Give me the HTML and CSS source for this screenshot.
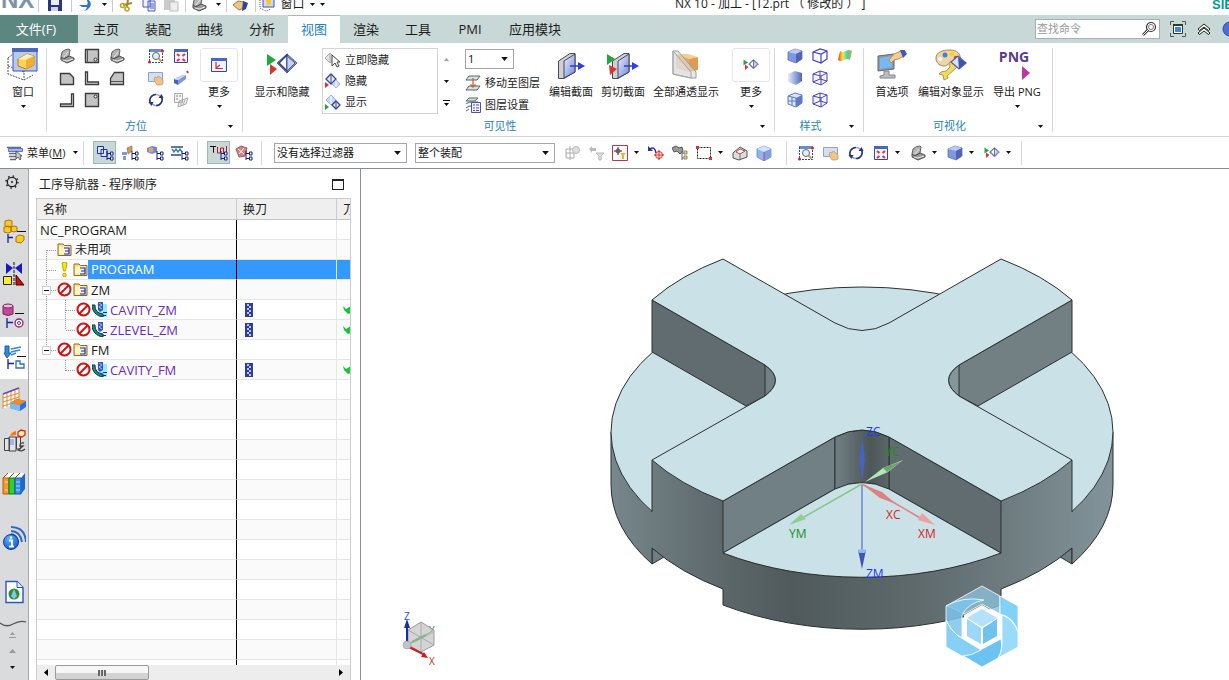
FILE: index.html
```html
<!DOCTYPE html>
<html lang="zh-CN">
<head>
<meta charset="utf-8">
<title>NX 10 - 加工 - [T2.prt （修改的）]</title>
<link rel="stylesheet" href="styles.css">
</head>
<body>
<svg class="defs" aria-hidden="true">
  <defs>
    <linearGradient id="gBlue" x1="0" y1="0" x2="1" y2="1"><stop offset="0" stop-color="#eef2ff"/><stop offset="1" stop-color="#6c86d8"/></linearGradient>
    <linearGradient id="gSoft" x1="0" y1="0" x2="1" y2="0"><stop offset="0" stop-color="#e6ebfb"/><stop offset="1" stop-color="#4c66bb"/></linearGradient>
    <linearGradient id="gRain" x1="0" y1="0" x2="1" y2="0"><stop offset="0" stop-color="#f0392b"/><stop offset=".35" stop-color="#ffe930"/><stop offset=".65" stop-color="#35d6c8"/><stop offset="1" stop-color="#f29a20"/></linearGradient>
    <radialGradient id="gInfo" cx=".4" cy=".3" r=".8"><stop offset="0" stop-color="#5fb4ff"/><stop offset="1" stop-color="#0b4fc4"/></radialGradient>
  </defs>
  <symbol id="dn" viewBox="0 0 5 3"><path d="M0 0h5L2.500 3z" fill="#111"/></symbol>
  <symbol id="tri" viewBox="0 0 16 16"><path d="M2 9L3 4q3-3 7-3l1 1-1 6-6 3z" fill="#b4b4b4" stroke="#555" stroke-width=".9"/><path d="M2 9l3 2 5-3 5 2v2l-7 3-6-3z" fill="#9a9a9a" stroke="#444" stroke-width=".9"/><path d="M5 9l4-5M4 12l4 1 6-2" stroke="#e8e8e8" fill="none"/></symbol>
  <symbol id="front" viewBox="0 0 16 16"><path d="M1.500 1.500h13v13h-13z" fill="#c4c4c4" stroke="#3c3c3c" stroke-width="1.400"/><path d="M3.500 2v12" stroke="#555"/><circle cx="11.500" cy="11.500" r="1.500" fill="#eee" stroke="#333"/></symbol>
  <symbol id="topv" viewBox="0 0 16 16"><path d="M1.500 3.500h9l4 4v7h-13z" fill="#c4c4c4" stroke="#3c3c3c" stroke-width="1.400"/></symbol>
  <symbol id="lv" viewBox="0 0 16 16"><path d="M1.500 2h2v10h11v2.500h-13z" fill="#ddd" stroke="#3c3c3c" stroke-width="1.300"/></symbol>
  <symbol id="rightv" viewBox="0 0 16 16"><path d="M5.500 2.500h9v12h-13v-6z" fill="#c4c4c4" stroke="#3c3c3c" stroke-width="1.300"/><path d="M2 11.500h12" stroke="#555"/></symbol>
  <symbol id="jv" viewBox="0 0 16 16"><path d="M14.500 2h-2v10h-11v2.500h13z" fill="#ddd" stroke="#3c3c3c" stroke-width="1.300"/></symbol>
  <symbol id="back" viewBox="0 0 16 16"><path d="M1.500 1.500h13v13h-13z" fill="#c4c4c4" stroke="#3c3c3c" stroke-width="1.400"/><circle cx="11.500" cy="4.500" r="1.500" fill="#eee" stroke="#333"/></symbol>
  <symbol id="fit" viewBox="0 0 16 16"><path d="M1 1h14v3H1z" fill="#6b8bd0"/><path d="M1.500 2v12.500h13V3" fill="none" stroke="#2a3fd0" stroke-dasharray="2 1"/><circle cx="8" cy="8" r="3.500" fill="#dfeefc" stroke="#666"/><path d="M10.500 10.500l3 3" stroke="#d29a3c" stroke-width="2"/><circle cx="14.500" cy="3" r="1.500" fill="#d22"/><circle cx="1.500" cy="14" r="1.500" fill="#d22"/></symbol>
  <symbol id="win" viewBox="0 0 16 16"><path d="M1.500 2.500h13v12h-13z" fill="#f3f6ff" stroke="#3346b0"/><path d="M1 1h14v3H1z" fill="#4668bd"/><path d="M4 6l2.500 2M12 6L9.500 8M4 13l2.500-2M12 13l-2.500-2" stroke="#e33" stroke-width="2.200"/></symbol>
  <symbol id="pan" viewBox="0 0 16 16"><path d="M.5 2.500h14v9H.5z" fill="#d5dff2" stroke="#8fa1cd"/><path d="M7 7l2 1 1-2 2 1 3 3v4l-2 1H9l-3-5z" fill="#eec48b" stroke="#b98a4c" stroke-width=".6"/></symbol>
  <symbol id="persp" viewBox="0 0 16 16"><path d="M1 9l4 1v5l-4-2z" fill="#4a62b8"/><path d="M5 10l8-5v4l-8 6z" fill="#7f96dd"/><path d="M1 9l8-4h4l-8 5z" fill="#c2cef4"/><path d="M14 1l1 2" stroke="#d33" stroke-width="2"/></symbol>
  <symbol id="rot" viewBox="0 0 16 16"><path d="M3 12A6 6 0 0 1 8 2.500M13 4a6 6 0 0 1-5 9.500" fill="none" stroke="#26357f" stroke-width="1.700"/><path d="M8 2.500a6 6 0 0 1 4 1.500M8 13.500A6 6 0 0 1 4 12" fill="none" stroke="#9aa9dd" stroke-width="1.700"/><path d="M.5 10l5 0-2 4zM10.500 6h5l-2-4z" fill="#26357f"/></symbol>
  <symbol id="snap" viewBox="0 0 16 16"><path d="M1.500 1.500h8v9h-8zM6 9l9-3-2 6-8 3zM8 9v5M12 8l-2 5" fill="#f2f2f2" stroke="#aaa"/><path d="M3 4h2M6 4h2M3 7h2" stroke="#888"/></symbol>
  <symbol id="csys" viewBox="0 0 18 16"><path d="M1.500 1.500h15v13h-15z" fill="#eef2fd" stroke="#3346b0"/><path d="M1 1h16v3H1z" fill="#4668bd"/><path d="M6 5v6.500h7M6 11l4-3" fill="none" stroke="#c33" stroke-width="1.200"/></symbol>
  <symbol id="showhide" viewBox="0 0 32 26"><path d="M1 2l9 6-9 6z" fill="#22a83a"/><path d="M4 12l7 5-7 6z" fill="#d5382e"/><path d="M11 11L21 2l10 9-10 10z" fill="#8a95b5" stroke="#59658f"/><path d="M13 11l8-8v16z" fill="#fff" stroke="#2b3a97" stroke-width="1.500"/><path d="M21 4l8 7-8 8z" fill="#c8d3f4" stroke="#4b5aa8"/></symbol>
  <symbol id="dia" viewBox="0 0 16 16"><path d="M1 6l5-5 5 5-5 5z" fill="#e6ecff" stroke="#3a4790" stroke-width="1.300"/><path d="M6 2v8" stroke="#3a4790"/><path d="M7 11l4-4 4 4-4 4z" fill="#c8d6fa" stroke="#9db2ec"/><path d="M11 8v6" stroke="#fff"/><path d="M0 9l4 3-4 3z" fill="#d5382e"/></symbol>
  <symbol id="dia2" viewBox="0 0 16 16"><path d="M1 6l5-5 5 5-5 5z" fill="#c8d6fa" stroke="#9db2ec"/><path d="M6 2v8" stroke="#fff"/><path d="M7 11l4-4 4 4-4 4z" fill="#e6ecff" stroke="#3a4790" stroke-width="1.300"/><path d="M11 8v6" stroke="#3a4790"/><path d="M0 10l4 3-4 3z" fill="#22a83a"/></symbol>
  <symbol id="dia0" viewBox="0 0 16 16"><path d="M0 6l5-5 5 5-5 5z" fill="#e4e4e4" stroke="#aaa"/><path d="M5 2v8" stroke="#aaa"/><path d="M7 3v11l3-3 2 4 2-1-2-4h3z" fill="#fff" stroke="#444"/></symbol>
  <symbol id="lay" viewBox="0 0 16 16"><path d="M4 1h11l-3 4H1zM4 11h11l-3 4H1z" fill="#d6e3df" stroke="#4d6b6b"/><path d="M8 3v9M5.500 9.500L8 12l2.500-2.500" stroke="#e4572e" stroke-width="1.300" fill="none"/></symbol>
  <symbol id="layset" viewBox="0 0 16 16"><path d="M4 1h9l-3 3H1zM1 7l3-2h9M1 11l3-2h6M1 14l3-2" fill="#d6e3df" stroke="#4d6b6b"/><path d="M6.500 5.500h9v10h-9z" fill="#f2f3ff" stroke="#4a4fc0"/><path d="M8 8h2M11 8h3M8 11h2M11 11h3M8 13.500h2M11 13.500h3" stroke="#4a4fc0"/></symbol>
  <symbol id="sec" viewBox="0 0 28 28"><path d="M1.500 9L13 1.500h5V20L7 26.500H1.500z" fill="#d0d0d4" stroke="#4a4a50"/><path d="M7 9l11-7v18L7 26z" fill="url(#gBlue)" stroke="#40465f"/><path d="M13 14h10" stroke="#2f3fc6" stroke-width="1.500"/><path d="M21 10l7 4-7 4z" fill="#2f3fe0"/></symbol>
  <symbol id="trans" viewBox="0 0 28 30"><path d="M4 4l13 2v16L4 18z" fill="#e5ab6c"/><path d="M4 4l12 0 10 3-9 2z" fill="#f6cd98"/><path d="M17 9l9-2v13l-9 2z" fill="#dd9b54"/><path d="M1 1h5l18 21v6h-5L1 24z" fill="#dadada" fill-opacity=".65" stroke="#9a9a9a"/><path d="M1 1v23l18 4v-6z" fill="#e2e2e2" fill-opacity=".5" stroke="#a2a2a2"/></symbol>
  <symbol id="cube" viewBox="0 0 16 16"><path d="M1 4l7-3 7 2v8l-6 4-8-3z" fill="#7f97de" stroke="#5a70bd" stroke-width=".8"/><path d="M1 4l8 2 6-3-7-2z" fill="#bccaf3"/><path d="M9 6l6-3v8l-6 4z" fill="#4e65b8"/></symbol>
  <symbol id="cubes" viewBox="0 0 16 16"><path d="M1 4l7-3 7 2v8l-6 4-8-3z" fill="url(#gSoft)"/></symbol>
  <symbol id="cubew" viewBox="0 0 16 16"><path d="M1 4l7-3 7 2v8l-6 4-8-3zM1 4l8 2 6-3M9 6v9" fill="#fafaff" stroke="#4740c4" stroke-width="1.200"/></symbol>
  <symbol id="cubex" viewBox="0 0 16 16"><path d="M1 4l7-3 7 2v8l-6 4-8-3zM1 4l8 2 6-3M9 6v9M1 12l7-3 7 2M8 1v8" fill="#f4f4ff" stroke="#4740c4"/></symbol>
  <symbol id="cubeh" viewBox="0 0 16 16"><path d="M1 4l7-3 7 2v8l-6 4-8-3z" fill="#dbe5fb" stroke="#5b7ac8"/><path d="M9 6l6-3v8l-6 4z" fill="#5e79c8"/><path d="M1 4l8 2M5 5v8M1 9h8M9 6v9" stroke="#5b7ac8" fill="none"/></symbol>
  <symbol id="rain" viewBox="0 0 16 16"><path d="M3 3q3 2 6 0t6 0l-2 9q-3-2-6 0t-6 0z" fill="url(#gRain)"/></symbol>
  <symbol id="pref" viewBox="0 0 30 30"><path d="M1 6l16-2v15L1 21z" fill="#8f9aa6" stroke="#667"/><path d="M3 8l12-2v11L3 19z" fill="#7ab8f2"/><path d="M7 21h5v4h6v3H3v-2l4-1z" fill="#b8bec4" stroke="#7d868e"/><path d="M12 10l5-6 7-3 3 5-6 3-4 1-3 3z" fill="#f3cd98" stroke="#b98d55"/><path d="M23 0l4-1 3 5-4 4z" fill="#4459b4"/></symbol>
  <symbol id="pal" viewBox="0 0 32 32"><path d="M1 9C1 3 8 1 15 1s11 4 10 9-5 5-8 4-5 4-9 3S1 14 1 9z" fill="#f2d3a4" stroke="#a98452"/><circle cx="10" cy="6" r="2.500" fill="#2e8be0"/><circle cx="17" cy="5" r="2.300" fill="#f5d80c"/><circle cx="21" cy="9" r="2.300" fill="#e63f2a"/><circle cx="5" cy="10" r="2" fill="#fff"/><path d="M14 14q4-4 8 0 2 4-2 6l-8 7 1 2-4 2-1-5-4-1 2-2 5-1 4-4z" fill="#f3da68" stroke="#b39a35"/><path d="M16 13l7-6 8 7-7 6z" fill="#d8e0fa" stroke="#5461a8" stroke-width="1.300"/><path d="M23 8l8 6-7 6z" fill="#3e55b0"/></symbol>
  <symbol id="folder" viewBox="0 0 15 14"><path d="M1 3V1.500h5L7.500 3H14v10H1z" fill="#f5df8a" stroke="#8e6b1e"/><path d="M2 4h11v8H2z" fill="#fdf4c0"/><path d="M7 5.500h5v6H7M8 8.500h4" stroke="#1a22d8" stroke-width="1.200" fill="none"/></symbol>
  <symbol id="no" viewBox="0 0 15 15"><circle cx="7.500" cy="7.500" r="6" fill="#fff" stroke="#d00f0f" stroke-width="2"/><path d="M3.500 11.500l8-8" stroke="#d00f0f" stroke-width="2"/></symbol>
  <symbol id="op" viewBox="0 0 15 15"><path d="M5 2h10v13H9z" fill="#8fefff"/><path d="M0 3h3c0 5 2 8 8 9v3C4 14 0 9 0 3z" fill="#128a80" stroke="#073b38"/><path d="M6 0h5v8L8 10 6 8z" fill="#3d55b8"/><path d="M7 1l3 2-3 2 3 2" stroke="#a9bcf0" fill="none"/><path d="M11 10.500h4M11 13.500h3" stroke="#1a22d8"/></symbol>
  <symbol id="op2" viewBox="0 0 15 15"><path d="M0 3h3c0 5 2 8 8 9v3C4 14 0 9 0 3z" fill="#128a80" stroke="#073b38"/><path d="M6 0h5v8L8 10 6 8z" fill="#3d55b8"/><path d="M7 1l3 2-3 2 3 2" stroke="#a9bcf0" fill="none"/><path d="M11 10.500h4M11 13.500h3" stroke="#1a22d8"/></symbol>
  <symbol id="tool" viewBox="0 0 8 14"><path d="M0 0h8v14H0z" fill="#2f3f98"/><path d="M2 1h2v2H2zM4 3h2v2H4zM2 5h2v2H2zM4 7h2v2H4zM2 9h2v2H2zM4 11h2v2H4z" fill="#b9c8f2"/></symbol>
  <symbol id="check" viewBox="0 0 8 10"><path d="M0 1l3 3 5-3v7L5 9 1 5z" fill="#16c43a"/></symbol>
  <symbol id="tree" viewBox="0 0 18 16"><path d="M11 6v9M11 8.500h3M11 13.500h3" stroke="#14208c" fill="none"/><path d="M14.500 7h2.500v3h-2.500zM14.500 12h2.500v3h-2.500z" fill="#fff" stroke="#14208c"/></symbol>
</svg>

<header class="titlebar">
  <span class="logo">NX</span>
  <i class="tsep"></i>
  <button class="tb save" aria-label="保存"><svg width="16" height="16" viewBox="0 0 16 16"><path d="M1 1h14v14H1z" fill="#27377e"/><path d="M4 1h8v8H4z" fill="#e8edf8"/><path d="M4 11h7v4H4z" fill="#cdd6ec"/></svg></button>
  <i class="tsep"></i>
  <button class="tb wide" aria-label="撤消"><svg width="16" height="16" viewBox="0 0 16 16"><path d="M2 9h8q2-3-2-7 8 3 5 9-2 3-6 4 3-2 3-4H5z" fill="#2f74cc"/></svg><svg class="dn"><use href="#dn"/></svg></button>
  <i class="tsep"></i>
  <button class="tb" aria-label="剪切"><svg width="16" height="16" viewBox="0 0 16 16"><path d="M4 9l9-2M9 3l-1 8" stroke="#a08a30" stroke-width="2"/><circle cx="3.500" cy="9.500" r="2" fill="none" stroke="#c2a822" stroke-width="1.600"/><circle cx="8" cy="13" r="2" fill="none" stroke="#c2a822" stroke-width="1.600"/></svg></button>
  <button class="tb" aria-label="复制"><svg width="16" height="16" viewBox="0 0 16 16"><path d="M2 1h7v10H2zM7 5h7v10H7z" fill="#eef1ff" stroke="#4a57c6"/><path d="M9 8h4M9 10h4M9 12h4" stroke="#4a57c6"/></svg></button>
  <button class="tb" aria-label="粘贴"><svg width="16" height="16" viewBox="0 0 16 16"><path d="M1 2h11v12H1z" fill="#ccc"/><path d="M7 6h8v9H7z" fill="#eee" stroke="#bbb"/></svg></button>
  <i class="tsep"></i>
  <button class="tb wide" aria-label="定向视图"><svg width="16" height="16"><use href="#tri"/></svg><svg class="dn"><use href="#dn"/></svg></button>
  <i class="tsep"></i>
  <button class="tb" aria-label="触控"><svg width="16" height="16" viewBox="0 0 16 16"><path d="M0 9l5-4 6 1v6l-5 2z" fill="#eec48b" stroke="#a87c3c"/><path d="M10 5l5 2-2 6-4 2z" fill="#31449c"/></svg></button>
  <i class="tsep"></i>
  <button class="tb winbtn"><svg width="16" height="16" viewBox="0 0 16 16"><path d="M1 4v8l6 3 5-2" fill="none" stroke="#555" stroke-dasharray="1 1"/><path d="M4 1h11v10H4z" fill="#cfd9f8" stroke="#3b4fd0"/><path d="M7 4l5-1v5l-4 2z" fill="#fbc531"/></svg><span>窗口</span><svg class="dn"><use href="#dn"/></svg><svg class="dn"><use href="#dn"/></svg></button>
  <h1>NX 10 - 加工 - [T2.prt （ 修改的 ） ]</h1>
  <span class="brand">SIE</span>
</header>

<nav class="tabs">
  <button class="file">文件(F)</button>
  <button>主页</button><button>装配</button><button>曲线</button><button>分析</button><button class="on">视图</button><button>渲染</button><button>工具</button><button>PMI</button><button class="last">应用模块</button>
  <label class="search"><input type="text" placeholder="查找命令" aria-label="查找命令"><svg width="16" height="16" viewBox="0 0 16 16"><circle cx="10" cy="6" r="4.500" fill="#fff" stroke="#333" stroke-width="1.200"/><circle cx="10" cy="6" r="2.500" fill="none" stroke="#777"/><path d="M7 9l-5 5" stroke="#333" stroke-width="2.500"/><path d="M7 9l-5 5" stroke="#fff"/></svg></label>
  <button class="tico" aria-label="全屏"><svg width="16" height="16" viewBox="0 0 16 16"><path d="M.5 4V.5H4M12 .5h3.500V4M15.500 12v3.500H12M4 15.500H.5V12" fill="none" stroke="#555"/><path d="M3.500 3.500h9v9h-9z" fill="#fff" stroke="#333"/><path d="M3 3h10v2H3z" fill="#333"/><path d="M5 6h6v5H5z" fill="#3b86dc"/></svg></button>
  <button class="tico" aria-label="最小化功能区"><svg width="16" height="16" viewBox="0 0 16 16"><path d="M2 8l6-5 6 5-1.500 1.500L8 6 3.500 9.500zM2 12l6-5 6 5-1.500 1.500L8 10l-4.500 3.500z" fill="#fff" stroke="#222"/></svg></button>
  <button class="tico" aria-label="帮助"><svg width="16" height="16" viewBox="0 0 16 16"><circle cx="8" cy="8" r="7" fill="#4d6fd4" stroke="#2b49a8"/></svg></button>
</nav>

<section class="ribbon">
  <div class="grp g0">
    <div class="body"><button class="big"><svg width="32" height="34" viewBox="0 0 32 34"><path d="M1 10v16l16 6 9-5M1 10l5-4M17 16v16M1 18l16 6" fill="none" stroke="#555" stroke-dasharray="2 1"/><path d="M6 1h24v22H6z" fill="#b9c8ee" stroke="#3850dc"/><path d="M5 0h26v4H5z" fill="#4a6ab4"/><path d="M11 11l9-5 7 2v9l-8 4-8-3z" fill="#fbd35a" stroke="#b77d12"/><path d="M11 11l8 1 8-4-7-2z" fill="#ffefb5"/><path d="M19 12l8-4v9l-8 4z" fill="#f3ad2b"/></svg><span>窗口</span><svg class="dn"><use href="#dn"/></svg></button></div>
  </div>
  <div class="grp g1">
    <div class="body">
      <div class="grid3">
        <button aria-label="正三轴测图"><svg><use href="#tri"/></svg></button><button aria-label="前视图"><svg><use href="#front"/></svg></button><button aria-label="正等测图"><svg><use href="#tri"/></svg></button>
        <button aria-label="俯视图"><svg><use href="#topv"/></svg></button><button aria-label="左视图"><svg><use href="#lv"/></svg></button><button aria-label="右视图"><svg><use href="#rightv"/></svg></button>
        <button aria-label="仰视图"><svg><use href="#jv"/></svg></button><button aria-label="后视图"><svg><use href="#back"/></svg></button>
      </div>
      <div class="grid2">
        <button aria-label="缩放"><svg><use href="#fit"/></svg></button><button aria-label="适合窗口"><svg><use href="#win"/></svg></button>
        <button aria-label="平移"><svg><use href="#pan"/></svg></button><button aria-label="透视"><svg><use href="#persp"/></svg></button>
        <button aria-label="旋转"><svg><use href="#rot"/></svg></button><button aria-label="捕捉视图"><svg><use href="#snap"/></svg></button>
      </div>
      <button class="more"><i><svg width="18" height="16"><use href="#csys"/></svg></i><span>更多</span><svg class="dn"><use href="#dn"/></svg></button>
    </div>
    <div class="cap"><span>方位</span><svg class="dn"><use href="#dn"/></svg></div>
  </div>
  <div class="grp g2">
    <div class="body">
      <button class="big w78"><svg width="32" height="34" viewBox="0 -4 32 34"><use href="#showhide" width="32" height="26"/></svg><span>显示和隐藏</span></button>
      <div class="gallery">
        <button><svg><use href="#dia0"/></svg>立即隐藏</button><button><svg><use href="#dia"/></svg>隐藏</button><button><svg><use href="#dia2"/></svg>显示</button>
      </div>
      <div class="galnav"><button aria-label="上"><svg class="dn up"><use href="#dn"/></svg></button><button aria-label="下"><svg class="dn"><use href="#dn"/></svg></button><button aria-label="展开"><svg width="7" height="7" viewBox="0 0 7 7"><path d="M0 .5h7" stroke="#111"/><path d="M1 3h5L3.500 6z"/></svg></button></div>
      <div class="layers">
        <span class="sel layer"><select aria-label="工作图层"><option>1</option></select><svg class="dn"><use href="#dn"/></svg></span>
        <button><svg><use href="#lay"/></svg>移动至图层</button>
        <button><svg><use href="#layset"/></svg>图层设置</button>
      </div>
      <button class="big w52"><svg width="28" height="34" viewBox="0 -4 28 34"><use href="#sec" width="28" height="28"/></svg><span>编辑截面</span></button>
      <button class="big w52"><svg width="32" height="34" viewBox="0 -4 32 34"><use href="#sec" x="4" width="28" height="28"/><path d="M0 2l8 5-8 6z" fill="#22a83a"/><path d="M2 13l8 4-7 6z" fill="#d5382e"/></svg><span>剪切截面</span></button>
      <button class="big w74"><svg width="28" height="34" viewBox="0 -2 28 34"><use href="#trans" width="28" height="30"/></svg><span>全部通透显示</span></button>
      <button class="more m2"><i><svg width="16" height="14"><use href="#showhide"/></svg></i><span>更多</span><svg class="dn"><use href="#dn"/></svg></button>
    </div>
    <div class="cap"><span>可见性</span><svg class="dn"><use href="#dn"/></svg></div>
  </div>
  <div class="grp g3">
    <div class="body">
      <div class="grid3">
        <button aria-label="带边着色"><svg><use href="#cube"/></svg></button><button aria-label="带有淡化边的线框"><svg><use href="#cubew"/></svg></button><button aria-label="面分析"><svg><use href="#rain"/></svg></button>
        <button aria-label="着色"><svg><use href="#cubes"/></svg></button><button aria-label="带有隐藏边的线框"><svg><use href="#cubex"/></svg></button><i></i>
        <button aria-label="局部着色"><svg><use href="#cubeh"/></svg></button><button aria-label="静态线框"><svg><use href="#cubex"/></svg></button>
      </div>
    </div>
    <div class="cap"><span>样式</span><svg class="dn"><use href="#dn"/></svg></div>
  </div>
  <div class="grp g4">
    <div class="body">
      <button class="big w52"><svg width="30" height="34" viewBox="0 -2 30 34"><use href="#pref" width="30" height="30"/></svg><span>首选项</span></button>
      <button class="big w66"><svg width="32" height="34" viewBox="0 -1 32 34"><use href="#pal" width="32" height="32"/></svg><span>编辑对象显示</span></button>
      <button class="big w66"><span class="png">PNG<svg width="8" height="14" viewBox="0 0 8 14"><path d="M0 0l8 7-8 7z" fill="#b83a9c"/></svg></span><span>导出 PNG</span><svg class="dn"><use href="#dn"/></svg></button>
    </div>
    <div class="cap"><span>可视化</span><svg class="dn"><use href="#dn"/></svg></div>
  </div>
</section>

<section class="toolbar">
  <button class="menu"><svg width="16" height="16" viewBox="0 0 16 16"><path d="M0 2.500h14M2 8.500h8M2 11.500h7M3 14.500h6" stroke="#667" stroke-width="1.300"/><path d="M1.500 3.500h14v3h-14z" fill="#9db8f5" stroke="#5b78c8"/><path d="M9 6v8l2-2 2 3 1-1-1-3h2z" fill="#ccc" stroke="#444" stroke-width=".8"/></svg><span>菜单(<u>M</u>)</span><svg class="dn"><use href="#dn"/></svg></button>
  <i class="sep"></i>
  <button class="tg on" aria-label="程序顺序视图"><svg viewBox="0 0 18 16"><path d="M1.500 1.500h6v7h-6zM5 4.500h6v7H5z" fill="#dfe6fb" stroke="#1e2fa8"/><use href="#tree"/></svg></button>
  <button class="tg" aria-label="机床视图"><svg viewBox="0 0 18 16"><path d="M1 7h5v3H1zM2 11h3v4H2z" fill="#7a9ad8"/><path d="M6 3l5-2v5l-4 3z" fill="#d99b3e" stroke="#666" stroke-width=".6"/><use href="#tree"/></svg></button>
  <button class="tg" aria-label="几何视图"><svg viewBox="0 0 18 16"><path d="M1 3l5-2 5 1v5L6 9 1 7z" fill="#6e88d6"/><circle cx="5" cy="5" r="2.500" fill="#e8a07a"/><use href="#tree"/></svg></button>
  <button class="tg" aria-label="加工方法视图"><svg viewBox="0 0 18 16"><path d="M0 2h12M0 10h10" stroke="#2b4f7a" stroke-width="1.500"/><path d="M1 4l2 3 2-3 2 3 2-3 2 3" stroke="#3b88b8" fill="none" stroke-width="1.400"/><use href="#tree"/></svg></button>
  <i class="sep"></i>
  <button class="tg on" aria-label="显示刀轨"><svg viewBox="0 0 18 16"><path d="M3.500 2v6M7.500 8V2M7.500 8h3M10.500 8V3M10.500 3h3v5M13.500 8h3V1" stroke="#c11616" fill="none"/><path d="M0 1.500h6M3.500 2v5" stroke="#111"/><use href="#tree"/></svg></button>
  <button class="tg" aria-label="过切检查"><svg viewBox="0 0 18 16"><path d="M1 4l5-3 6 2-2 8-6 1z" fill="#d98080" stroke="#9a5a5a"/><path d="M3 4l6 5M4 9l5-6" stroke="#fff"/><use href="#tree"/></svg></button>
  <i class="sep"></i>
  <span class="sel f1"><select aria-label="选择过滤器"><option>没有选择过滤器</option></select><svg class="dn"><use href="#dn"/></svg></span>
  <span class="sel f2"><select aria-label="选择范围"><option>整个装配</option></select><svg class="dn"><use href="#dn"/></svg></span>
  <div class="run">
    <button aria-label="选择常规"><svg><path d="M2 4h8v9H2zM2 8h8M6 1v14" fill="none" stroke="#aaa"/><circle cx="12" cy="5" r="3.500" fill="#ddd" stroke="#bbb"/></svg></button>
    <button aria-label="重置过滤器"><svg><path d="M1 4l3-3v2h4v3H4v2z" fill="#bbb"/><path d="M8 8h8l-3 3v4h-2v-4z" fill="#ddd" stroke="#bbb"/></svg></button>
    <span class="split"><button aria-label="捕捉点"><svg><path d="M.5 .5h15v15H.5z" fill="#fff" stroke="#c3304a"/><circle cx="6" cy="6" r="2" fill="none" stroke="#c33"/><path d="M6 2v8M2 6h8" stroke="#333"/><path d="M8 8h6l-2 2.500V14h-2v-3.500z" fill="#f0b429"/></svg></button><svg class="dn"><use href="#dn"/></svg></span>
    <button aria-label="旋转点"><svg><path d="M8 8Q7 1 2 4" fill="none" stroke="#2a3590" stroke-width="1.500"/><path d="M0 1v5h5z" fill="#2a3590"/><circle cx="11" cy="10" r="3.500" fill="#fff" stroke="#d22"/><path d="M11 5v10M6 10h10" stroke="#d22"/></svg></button>
    <button aria-label="导航器中查找"><svg><path d="M0 3l4-2 3 2 3-1 1 4-3 3-3-3-3 1z" fill="#999" stroke="#555"/><path d="M10 6v9M10 8h3M10 13h3" stroke="#567"/><path d="M12 6h3v3h-3zM12 11h3v3h-3z" fill="#e8cf50" stroke="#987"/></svg></button>
    <span class="split"><button aria-label="矩形选择"><svg><path d="M1.500 2.500h13v11h-13z" fill="none" stroke="#222" stroke-dasharray="2 1"/><path d="M0 1h3v3H0zM13 12h3v3h-3z" fill="#d33"/></svg></button><svg class="dn"><use href="#dn"/></svg></span>
    <button aria-label="高亮隐藏边"><svg><path d="M1 8l7-6 7 4v6l-8 3-6-2z" fill="#ddd" stroke="#555"/><path d="M4 7l4-3 5 2-5 3z" fill="#fff" stroke="#c44"/><path d="M8 9v5" stroke="#777"/></svg></button>
    <button aria-label="着色面"><svg><path d="M1 4l7-3 7 3v8l-7 4-7-4z" fill="#8ab7f5" stroke="#5b78b8" stroke-width=".7"/><path d="M1 4l7-3 7 3-7 3z" fill="#cfe4fd"/><path d="M8 7l7-3v8l-7 4z" fill="#7d9fe6"/><path d="M8 7v9" stroke="#e36"/></svg></button>
  </div>
  <i class="sep s2"></i>
  <div class="run r2">
    <button aria-label="缩放"><svg><use href="#fit"/></svg></button>
    <button aria-label="平移"><svg><use href="#pan"/></svg></button>
    <button aria-label="旋转"><svg><use href="#rot"/></svg></button>
    <span class="split"><button aria-label="适合窗口"><svg><use href="#win"/></svg></button><svg class="dn"><use href="#dn"/></svg></span>
    <span class="split"><button aria-label="定向"><svg><use href="#tri"/></svg></button><svg class="dn"><use href="#dn"/></svg></span>
    <span class="split"><button aria-label="着色"><svg><use href="#cube"/></svg></button><svg class="dn"><use href="#dn"/></svg></span>
    <span class="split"><button aria-label="显示和隐藏"><svg><use href="#showhide"/></svg></button><svg class="dn"><use href="#dn"/></svg></span>
  </div>
  <i class="sep"></i>
</section>

<main>
  <aside class="side">
    <button class="gear" aria-label="资源条选项"><svg width="14" height="14" viewBox="0 0 14 14"><circle cx="7" cy="7" r="4.700" fill="none" stroke="#222" stroke-width="1.300"/><circle cx="7" cy="7" r="6" fill="none" stroke="#222" stroke-width="1.500" stroke-dasharray="1.500 3.210"/><circle cx="7" cy="7" r="1" fill="#222"/></svg></button>
    <button aria-label="装配导航器"><svg viewBox="0 0 24 26"><path d="M3 2l4-1 3 1v5l-3 1-4-1zM2 8l4-1 3 1v5l-3 1-4-1zM9 8l4-1 2 1v4l-3 1-3-1z" fill="#fcc92a" stroke="#a97808"/><path d="M15 12.500h9" stroke="#111"/><path d="M6 15v9M6 18.500h5" stroke="#1420a0" stroke-width="1.300"/><path d="M14 18l3-2 5 1v4l-3 3-5-1z" fill="#fcc92a" stroke="#a97808"/></svg></button>
    <button aria-label="约束导航器"><svg viewBox="0 0 24 26"><path d="M4 2l7 5-7 6zM20 2l-7 5 7 6z" fill="#1818c8"/><path d="M12 1v24" stroke="#111" stroke-dasharray="3 1"/><path d="M1.500 15.500h8v8h-8z" fill="#ffe92c" stroke="#222"/><path d="M14 14v10h8z" fill="#c81010" stroke="#400"/></svg></button>
    <button aria-label="部件导航器"><svg viewBox="0 0 24 26"><path d="M1 3v8q5 3 10 0V3z" fill="#c04a9a" stroke="#7a2560"/><ellipse cx="6" cy="3" rx="5" ry="2" fill="#efb6dc" stroke="#7a2560"/><path d="M13 10.500h9" stroke="#111"/><path d="M5 15v10M5 19.500h6" stroke="#1420a0" stroke-width="1.300"/><circle cx="17" cy="20" r="4" fill="#fff" stroke="#902070" stroke-width="1.300"/><circle cx="17" cy="20" r="1.500" fill="none" stroke="#902070"/></svg></button>
    <button class="on" aria-label="工序导航器"><svg viewBox="0 0 24 26"><path d="M2 1h4v7h2l-4 5-3-5h1z" fill="#3787d6" stroke="#1d5ca4"/><path d="M8 4l10-2M8 7l9-2M8 10l5-2" stroke="#3787d6" stroke-width="1.400"/><path d="M14 11.500h9" stroke="#111"/><path d="M5 14v10M5 18.500h6" stroke="#1420a0" stroke-width="1.300"/><path d="M13 16h4v3h4v4h-8z" fill="#fff" stroke="#2b6fc0" stroke-width="1.300"/></svg></button>
    <button aria-label="加工特征导航器"><svg viewBox="0 0 24 26"><path d="M1 7l16-6v14L1 22z" fill="#fff"/><path d="M1 7l16-6M1 11l16-5M1 15l16-5M1 19l16-5M1 22V7M5 20V6M9 19V4M13 17V3M17 15V1" stroke="#e8862a" fill="none"/><path d="M1 7l16-6" stroke="#6b46b8" stroke-width="1.600"/><path d="M8 16l7-4 9 2v6l-6 4-10-3z" fill="#2471e8"/><path d="M8 16l7-4 9 2-6 4z" fill="#f58a1c"/><path d="M8 16l10 2v6L8 21z" fill="#7cbcf0"/></svg></button>
    <button aria-label="机床导航器"><svg viewBox="0 0 24 26"><path d="M2.500 9.500h5v12h-5zM7 8h7v14H7zM14.500 8h4v12h-4z" fill="#e3e3e8" stroke="#444"/><path d="M8 10h4v6H8z" fill="#9bb8e8"/><path d="M8 7q1-4 6-5v4" fill="#f07a1e"/><path d="M16 3l3-2 4 1v4l-3 2-4-1z" fill="#fff3a0" stroke="#d22" stroke-width="1.300"/><path d="M22 14q-4-1-4 3h3q-3 3-5 4 4 2 7-1" fill="none" stroke="#444" stroke-width="1.300"/></svg></button>
    <button aria-label="重用库"><svg viewBox="0 0 24 26"><path d="M1 6l4-4h18v16l-5 5H1z" fill="#fff"/><path d="M1 7h6v16H1z" fill="#f49a2c" stroke="#b05f08"/><path d="M7 7h6v16H7z" fill="#2fd02f" stroke="#127a12"/><path d="M13 7h6v16h-6z" fill="#3a92f0" stroke="#1256a8"/><path d="M19 7l4-5v16l-4 5z" fill="#2068c8"/><path d="M1 7l5-5M7 7l5-5M13 7l5-5" stroke="#8a4a10"/><path d="M3 11h3M3 19h3M14 11h4M14 15h4M14 19h4" stroke="#fff" stroke-opacity=".6"/></svg></button>
    <button class="tall info" aria-label="信息"><svg viewBox="0 0 24 26"><path d="M9 2q14 0 15 15M9 6q9 0 11 11M9 9q6 1 7 8" stroke="#2f66c8" stroke-width="2" fill="none"/><circle cx="9" cy="17" r="7.500" fill="url(#gInfo)" stroke="#0a3d94"/><path d="M7 15.500h3v5.500M7 21.500h5" stroke="#fff" stroke-width="1.800" fill="none"/><circle cx="9" cy="12.500" r="1.300" fill="#fff"/></svg></button>
    <button class="tall" aria-label="网页浏览器"><svg viewBox="0 0 24 26"><path d="M4 2.500h11l6 6v15H4z" fill="#fff" stroke="#2a56c0" stroke-width="1.400"/><path d="M15 2.500v6h6" fill="#e4ecff" stroke="#2a56c0"/><circle cx="12" cy="15" r="5.500" fill="#2f8f2a"/><path d="M12 10l3 7-3 3-3-3z" fill="#7fc8f8"/></svg></button>
    <svg class="wave" viewBox="0 0 28 8"><path d="M0 4q6 5 13 1t13-2" fill="none" stroke="#555" stroke-width="1.300"/></svg>
    <button class="nav" aria-label="首"><svg width="7" height="6" viewBox="0 0 7 6"><path d="M1 3h5L3.500 0zM0 5h7v1H0z" fill="#999"/></svg></button>
    <button class="nav" aria-label="上"><svg width="5" height="3" viewBox="0 0 5 3"><path d="M0 3h5L2.500 0z" fill="#999"/></svg></button>
    <button class="nav" aria-label="下"><svg class="dn"><use href="#dn"/></svg></button>
  </aside>

  <section class="panel">
    <div class="phead"><h2>工序导航器 - 程序顺序</h2><button aria-label="最大化"></button></div>
    <div class="tbl">
      <div class="scroll">
      <table>
        <colgroup><col class="c1"><col class="c2"><col class="c3"></colgroup>
        <thead><tr><th>名称</th><th>换刀</th><th>刀</th></tr></thead>
        <tbody>
          <tr><td><div>NC_PROGRAM</div></td><td></td><td></td></tr>
          <tr><td><div class="l1 zh"><svg><use href="#folder"/></svg>未用项</div></td><td></td><td></td></tr>
          <tr class="cur"><td><div class="l1"><svg viewBox="0 0 15 15"><path d="M5 1q3-2 5 0l-1.500 8h-2z" fill="#ffe600" stroke="#a89400" stroke-width=".8"/><circle cx="7.500" cy="13" r="1.800" fill="#ffe600" stroke="#a89400" stroke-width=".8"/></svg><svg><use href="#folder"/></svg><b>PROGRAM</b></div></td><td></td><td></td></tr>
          <tr><td><div class="l1"><svg><use href="#no"/></svg><svg><use href="#folder"/></svg>ZM</div></td><td></td><td></td></tr>
          <tr class="opn"><td><div class="l2"><svg><use href="#no"/></svg><svg><use href="#op"/></svg>CAVITY_ZM</div></td><td><svg class="t"><use href="#tool"/></svg></td><td><svg class="k"><use href="#check"/></svg></td></tr>
          <tr class="opn"><td><div class="l2"><svg><use href="#no"/></svg><svg><use href="#op2"/></svg>ZLEVEL_ZM</div></td><td><svg class="t"><use href="#tool"/></svg></td><td><svg class="k"><use href="#check"/></svg></td></tr>
          <tr><td><div class="l1"><svg><use href="#no"/></svg><svg><use href="#folder"/></svg>FM</div></td><td></td><td></td></tr>
          <tr class="opn"><td><div class="l2"><svg><use href="#no"/></svg><svg><use href="#op"/></svg>CAVITY_FM</div></td><td><svg class="t"><use href="#tool"/></svg></td><td><svg class="k"><use href="#check"/></svg></td></tr>
          <tr><td></td><td></td><td></td></tr><tr><td></td><td></td><td></td></tr><tr><td></td><td></td><td></td></tr><tr><td></td><td></td><td></td></tr><tr><td></td><td></td><td></td></tr><tr><td></td><td></td><td></td></tr><tr><td></td><td></td><td></td></tr><tr><td></td><td></td><td></td></tr><tr><td></td><td></td><td></td></tr><tr><td></td><td></td><td></td></tr><tr><td></td><td></td><td></td></tr><tr><td></td><td></td><td></td></tr><tr><td></td><td></td><td></td></tr><tr><td></td><td></td><td></td></tr><tr><td></td><td></td><td></td></tr>
        </tbody>
      </table>
      <svg class="lines" width="40" height="160" viewBox="0 0 40 160"><path d="M9.500 30v98M10 30.500h9M10 50.500h9M14 70.500h5M28.500 80v30M29 90.500h9M29 110.500h9M14 130.500h5M28.500 140v11M29 150.500h9" fill="none" stroke="#999" stroke-dasharray="1 1"/><path d="M5.500 66.500h8v8h-8zM5.500 126.500h8v8h-8z" fill="#fff" stroke="#ccc"/><path d="M7 70.500h5M7 130.500h5" stroke="#111"/></svg>
      </div>
      <div class="hbar"><button aria-label="左"><svg width="4" height="7" viewBox="0 0 4 7"><path d="M4 0v7L0 3.500z"/></svg></button><span class="track"><i class="thumb"></i></span><button aria-label="右"><svg width="4" height="7" viewBox="0 0 4 7"><path d="M0 0v7l4-3.500z"/></svg></button></div>
    </div>
  </section>

  <section class="view">
    <svg viewBox="361 169 868 511" preserveAspectRatio="xMidYMid meet" role="img" aria-label="T2.prt">
      <defs>
        <linearGradient id="cyl" gradientUnits="userSpaceOnUse" x1="611" y1="0" x2="1113" y2="0"><stop offset="0" stop-color="#77878b"/><stop offset=".09" stop-color="#6c7a7e"/><stop offset=".22" stop-color="#5d686b"/><stop offset=".36" stop-color="#505a5c"/><stop offset=".6" stop-color="#5d696b"/><stop offset=".8" stop-color="#6f7d81"/><stop offset="1" stop-color="#82949a"/></linearGradient>
        <linearGradient id="fil" x1="0" y1="0" x2="1" y2="0"><stop offset="0" stop-color="#718085"/><stop offset=".65" stop-color="#4d5658"/><stop offset="1" stop-color="#5c676a"/></linearGradient>
      </defs>
      <g stroke="#2b3030" stroke-width="1" stroke-linejoin="round">
        <path d="M652 548V564L664 557ZM1072 548V564L1060 557Z" fill="#6e7d81"/>
        <path d="M611 432V484A251 145 0 0 0 652 564V548A251 145 0 0 0 723 589V605A251 145 0 0 0 1001 605V589A251 145 0 0 0 1072 548V564A251 145 0 0 0 1113 484V432Z" fill="url(#cyl)"/>
        <ellipse cx="862" cy="432" rx="251" ry="145" fill="#cae1e7"/>
        <path d="M652 300L765 365Q786 380 765 396L746 406L652 352Z" fill="#606c70"/>
        <path d="M765 365Q786 380 765 396Z" fill="#728186"/>
        <path d="M1072 300L959 365Q938 380 959 396L978 406L1072 352Z" fill="#728084"/>
        <path d="M959 365Q938 380 959 396Z" fill="#85969b"/>
        <path d="M652 460V513A251 145 0 0 0 723 555V501L1001 501V555A251 145 0 0 0 1072 513V460Z" fill="url(#cyl)" stroke="none"/>
        <path d="M652 512V460M1072 512V460" fill="none"/>
        <path d="M723 501L835 437V489L723 553Z" fill="#718085"/>
        <path d="M1001 501L889 437V489L1001 553Z" fill="#606c70"/>
        <path d="M835 437Q862 423 889 437V489Q862 476 835 489Z" fill="url(#fil)"/>
        <path d="M723 553L835 489Q862 476 889 489L1001 553A251 145 0 0 1 723 553Z" fill="#cae1e7"/>
        <path d="M723 259L835 323Q862 338 889 323L1001 259A251 145 0 0 1 1072 300L959 365Q938 380 959 396L1072 460A251 145 0 0 1 1001 501L889 437Q862 423 835 437L723 501A251 145 0 0 1 652 460L765 396Q786 380 765 365L652 300A251 145 0 0 1 723 259Z" fill="#cae1e7"/>
      </g>
      <path d="M862 484V552" stroke="#7a96d4" stroke-width="1.800"/><path d="M858 550h8l-4 19z" fill="#3d57b0"/><ellipse cx="862" cy="551" rx="4" ry="2" fill="#92b8fa"/>
      <path d="M862 437l3 22-3 22-3-22z" fill="#4763bb"/>
      <path d="M862 484l-58 33" stroke="#86c886" stroke-width="1.500"/><path d="M789 525l12-11 5 5z" fill="#90cd90"/>
      <path d="M865 482l18-14 20-8-15 12z" fill="#b5e6b5"/><path d="M883 468l4 4 15-11z" fill="#6aa36a"/>
      <path d="M862 484l60 35" stroke="#e87f7f" stroke-width="1.500"/><path d="M862 484l20 8 14 12-16-6z" fill="#dd8080"/><path d="M935 525l-17-5 4-7z" fill="#f0a0a0"/>
      <g class="axis"><text x="866" y="436" fill="#1b3cf0">ZC</text><text x="866" y="578" fill="#1b3cf0">ZM</text><text x="885" y="456" fill="#149114">YC</text><text x="789" y="538" fill="#149114">YM</text><text x="886" y="519" fill="#d81e1e">XC</text><text x="918" y="538" fill="#d81e1e">XM</text></g>
      <g class="axis small"><text x="404" y="620" fill="#2f4df0">Z</text><text x="429" y="634" fill="#149114">Y</text><text x="429" y="665" fill="#d81e1e">X</text></g>
      <path d="M407 645l26-13" stroke="#6bb06b" stroke-width="2"/>
      <path d="M421 622l13 8v15l-13 7-13-7v-15z" fill="#c9c9c9" fill-opacity=".8" stroke="#9a9a9a"/><path d="M408 630l26 15M434 630l-26 15M421 622v30" stroke="#aaa"/><path d="M412 642l14-7" stroke="#86b489" stroke-width="2"/>
      <path d="M407 644v-18" stroke="#0f2fb0" stroke-width="2"/><path d="M404 628l3-9 3 9z" fill="#0f2fb0"/>
      <path d="M409 647l16 8" stroke="#cc2020" stroke-width="2"/><path d="M428 658l-7-1 3-5z" fill="#cc2020"/><circle cx="407" cy="645" r="4" fill="#c4c4c4" stroke="#909090" stroke-width=".5"/>
      <g stroke="#fff" stroke-width="1" stroke-opacity=".8">
        <path d="M982 586L1000 596V614L982 604L964 614Q955 608 946 606Z" fill="#8bbfd8" fill-opacity=".8"/>
        <path d="M1000 596L1018 606V632Q1014 617 1000 614Z" fill="#74cdf6" fill-opacity=".9"/>
        <path d="M1018 632V647L998 658Q1003 650 1002 638V615Q1013 619 1018 632Z" fill="#8fd6fa" fill-opacity=".9"/>
        <path d="M982 667L998 658Q1003 650 1001 639L982 649Q973 655 962 655Z" fill="#5abdf0" fill-opacity=".9"/>
        <path d="M946 647L962 656Q972 656 981 650L963 639Q952 633 946 620Z" fill="#79cbf5" fill-opacity=".9"/>
        <path d="M946 606V620Q952 633 962 638V615Q968 603 984 600Q963 596 946 606Z" fill="#7cc4ec" fill-opacity=".85"/>
      </g>
      <path d="M982 605L1000 615V638L982 648L964 638V615Z" fill="#fff" fill-opacity=".95"/>
      <path d="M982 609l15 9-15 9-15-9z" fill="#b5e2fa"/><path d="M967 619l14 9v16l-14-8z" fill="#9ad7f8"/><path d="M997 619l-14 9v16l14-8z" fill="#6fc3ef"/>
    </svg>
  </section>
</main>
</body>
</html>
```
FILE: styles.css
```css
*{box-sizing:border-box}
html,body{height:100%}
body{margin:0;display:flex;flex-direction:column;overflow:hidden;background:#fff;color:#1c1c1c;font:11px/16px "Open Sans","Noto Sans CJK SC",sans-serif}
button{border:0;background:none;padding:0;margin:0;font:inherit;color:inherit;display:flex;align-items:center;justify-content:center;flex:none;white-space:nowrap}
svg{display:block;flex:none}
h1,h2{margin:0;font-weight:400}
.defs{position:absolute;width:0;height:0}
.dn{width:5px;height:3px}

.titlebar{height:15px;flex:none;display:flex;align-items:flex-end;overflow:hidden;position:relative}
.logo{width:38px;padding-left:1px;font:bold 24px/28px "Liberation Sans",sans-serif;color:#7c94ab;height:29px}
.tsep{width:1px;height:12px;background:#ccc;margin:0 3px 3px}
.logo + .tsep{margin-left:0}
.tb{width:22px;height:22px}
.tb.save{width:26px}
.tb.wide{width:34px;gap:9px}
.tb.winbtn{width:66px;gap:5px;font-size:12px}
.titlebar h1{position:absolute;left:675px;bottom:0;font-size:12px;line-height:22px;white-space:nowrap}
.brand{margin-left:auto;width:17px;overflow:hidden;font:bold 13px/16px "Liberation Sans",sans-serif;color:#009a96;height:18px}

.tabs{height:28px;flex:none;background:#c8d8d6;display:flex;align-items:stretch;font-size:13px}
.tabs > button{width:52px}
.tabs .file{width:78px;padding-right:6px;background:#5c8781;color:#fff;margin-right:2px}
.tabs .on{background:#fff;color:#1e82bd;border-top:1px solid #a9b7b6;padding-bottom:1px}
.tabs .last{width:78px}
.search{margin-left:auto;align-self:center;width:125px;height:20px;display:flex;align-items:center;background:#fff;border:1px solid #a8b0b0;padding-right:2px}
.search input{flex:1;min-width:0;border:0;outline:0;padding:0 1px;font:inherit;font-size:11px;background:none}
.search input::placeholder{color:#9a9a9a;opacity:1}
.tabs .tico{width:26px}
.search + .tico{margin-left:5px}
.tabs .tico:last-child{margin-right:-14px}

.ribbon{height:94px;flex:none;display:flex;padding:5px 0 4px;border-bottom:1px solid #d4d4d4}
.grp{display:flex;flex-direction:column;border-right:1px solid #d8d8d8;flex:none}
.g0{width:47px}.g1{width:196px}.g2{width:532px}.g3{width:89px}.g4{width:189px}
.body{flex:1;display:flex;align-items:flex-start}
.cap{height:12px;display:flex;align-items:center;justify-content:center;color:#1e82bd;position:relative;padding-right:17px}
.cap .dn{position:absolute;right:9px}
.big{flex-direction:column;justify-content:flex-start;width:46px}
.big > span,.more > span{margin-top:2px}
.big > .dn,.more > .dn{margin-top:5px}
.w78{width:78px}.w52{width:52px}.w74{width:74px}.w66{width:66px}
.grid3,.grid2{display:grid;grid-auto-rows:22px;grid-template-columns:repeat(3,25px);margin-top:-3px}
.grid2{grid-template-columns:repeat(2,25px)}
.grid3 svg,.grid2 svg,.gallery svg,.layers button svg{width:16px;height:16px}
.g1 .grid3{margin-left:7px}.g1 .grid2{margin-left:14px}
.g3 .grid3{margin-left:7px}
.more{flex-direction:column;width:38px;margin-left:7px}
.more i{width:38px;height:34px;border:1px solid #e6e6e6;border-radius:3px;display:flex;align-items:center;justify-content:center}
.gallery{width:116px;height:66px;border:1px solid #d4d4d4;margin-left:1px;display:flex;flex-direction:column}
.gallery button{height:21px;justify-content:flex-start;padding-left:2px;gap:4px}
.galnav{width:16px;display:flex;flex-direction:column}
.galnav button{height:22px}
.up{transform:rotate(180deg);opacity:.4}
.layers{width:91px;padding-left:11px;display:flex;flex-direction:column}
.layers button{height:22px;justify-content:flex-start;gap:4px}
.sel{position:relative;display:flex;align-items:center;flex:none}
.sel select{appearance:none;width:100%;height:20px;border:1px solid #a5a5a5;border-radius:0;background:#fff;padding:0 16px 0 2px;font:inherit;color:#111}
.sel .dn{position:absolute;right:6px;width:7px;height:4px}
.layer{width:49px;margin:1px 0 3px}
.m2{margin-left:9px}
.g4 .body{padding-left:2px}
.png{height:34px;margin:0 6px 0 0;font:bold 14px/18px "Open Sans",sans-serif;color:#5b3b8c;display:flex;flex-direction:column}
.big > .png{margin-top:0}
.png svg{margin-left:23px}

.toolbar{height:32px;flex:none;display:flex;align-items:center;border-bottom:1px solid #848b93}
.menu{width:71px;margin:0 5px 0 7px;gap:4px;justify-content:flex-start}
.menu .dn{margin-left:4px}
.sep{width:1px;height:24px;background:#d8d8d8;margin:0 9px 0 0;flex:none}
.tg{width:23px;height:23px;margin-right:2px}
.tg svg{width:18px;height:16px}
.tg.on{background:#c8d8d6;border:1px solid #9fb8b4}
.tg + .sep{margin-left:4px}
.sel.f1{width:133px;margin:0 8px 0 3px}
.sel.f2{width:140px}
.run{display:flex;gap:6px;margin-left:8px}
.run button{width:18px;height:18px}
.run svg{width:16px;height:16px}
.split{display:flex;align-items:center;width:30px;gap:5px}
.split .dn{width:5px;height:3px}
.s2{margin:0 2px 0 13px}
.r2{gap:7px;margin-right:8px}

main{flex:1;min-height:0;display:flex}
.side{width:29px;flex:none;background:#dadbdc;border-right:1px solid #a8a8a8;display:flex;flex-direction:column;overflow:hidden}
.side button{height:42px;width:28px}
.side button svg:not(.dn){width:24px;height:26px}
.side .gear{height:26px;margin-bottom:16px;padding-right:4px}
.side .gear svg:not(.dn){width:14px;height:14px}
.side .on{background:#fff;width:29px}
.side .tall{height:54px}
.side .info{margin-top:6px}
.side .wave{width:28px;height:8px}
.side .nav{height:16px;padding-right:4px}
.side .nav svg:not(.dn){width:7px;height:6px}
.panel{width:332px;flex:none;padding:0 9px 0 7px;border-right:1px solid #8a8f94;display:flex;flex-direction:column;font-size:12px}
.phead{height:29px;flex:none;display:flex;align-items:center;justify-content:space-between;padding:2px 7px 0 3px}
.phead h2{font-size:12px}
.phead button{width:12px;height:11px;border:1px solid #222;border-top-width:2px}
.tbl{flex:1;min-height:0;display:flex;flex-direction:column;border:1px solid #ccc;border-bottom:0}
.scroll{flex:1;min-height:0;overflow:hidden;position:relative}
table{width:100%;border-collapse:separate;border-spacing:0;table-layout:fixed}
.c1{width:200px}.c2{width:100px}
th{height:21px;padding:1px 0 0 6px;text-align:left;font-weight:400;background:#efefef;border-right:1px solid #ccc;border-bottom:1px solid #c4c4c4;overflow:hidden;line-height:18px;white-space:nowrap}
td{height:20px;padding:0 0 0 8px;border-right:1px solid #e6e6e6;border-bottom:1px solid #e6e6e6;overflow:hidden;font-size:13px;line-height:18px}
td:first-child{border-right-color:#000;padding-left:3px}
th:last-child,td:last-child{border-right:0}
tbody tr:nth-child(even) td{background:#fafafa}
td > div{display:flex;align-items:center;height:19px;gap:1px}
td svg{width:15px;height:15px}
.zh{font-size:12px}
.l1{padding-left:17px}
.l2{padding-left:36px}
.l1 svg:last-of-type,.l2 svg:last-of-type{margin-right:2px}
.cur b{font-weight:400;background:#3399ff;color:#fff;flex:1;margin-left:-3px;padding-left:3px;height:19px}
.cur td:nth-child(n+2){background:#3399ff}
.opn{color:#6a2bc4}
td .t{width:8px;height:14px}
td .k{width:8px;height:10px}
td:last-child{padding-left:6px}
.lines{position:absolute;left:0;top:21px}
.hbar{height:15px;flex:none;display:flex;background:#ededed}
.hbar button{width:18px}
.track{flex:1;display:flex}
.thumb{width:94px;border:1px solid #999;border-radius:2px;background:repeating-linear-gradient(90deg,#666 0 2px,#e4e4e4 2px 3px) center/8px 6px no-repeat,linear-gradient(#f6f6f6 50%,#d2d2d2 50%)}
.view{flex:1;min-width:0;background:#fff}
.view svg{width:100%;height:100%}
.axis{font-size:12px}
.small{font-size:10px}
```
